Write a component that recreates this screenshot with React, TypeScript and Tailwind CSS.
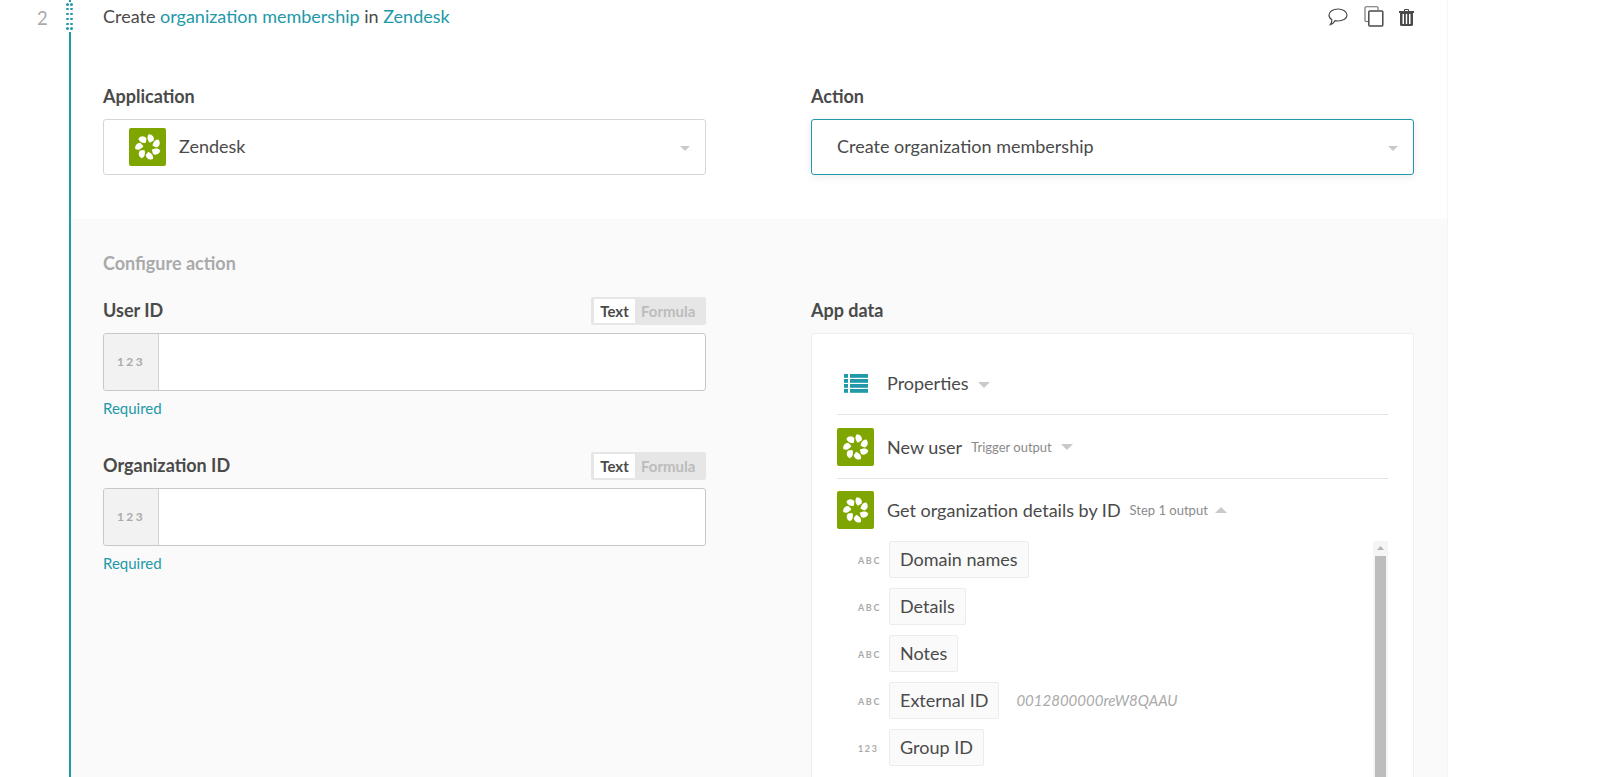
import { ReactNode } from 'react';

// Zendesk app badge, pinwheel of seven petals
const AppLogo = () => (
  <div className="w-[37px] h-[38px] shrink-0 rounded-[2px] bg-[#7fa600] flex items-center justify-center">
    <svg width="26" height="26" viewBox="-13 -13 26 26" fill="#fff">
      {[0, 1, 2, 3, 4, 5, 6].map((i) => (
        <path
          key={i}
          transform={`rotate(${(i * 360) / 7 + 8})`}
          d="M-1 -12.8 C 2.6 -13.2 5.2 -10.8 4.7 -7.2 L 1.3 -4.5 C -1.2 -6.4 -3.1 -9.8 -1 -12.8 Z"
        />
      ))}
    </svg>
  </div>
);

const Caret = ({ up, className }: { up?: boolean; className?: string }) => (
  <svg viewBox="0 0 12 6" className={className}>
    <path d={up ? 'M6 0 L12 6 L0 6 Z' : 'M0 0 L12 0 L6 6 Z'} fill="#c9c9c9" />
  </svg>
);

const ModeToggle = () => (
  <div className="flex h-[28px] w-[115px] items-center rounded-[2px] bg-[#e6e6e6] pl-[3px] text-[15px] font-bold">
    <span className="flex h-[24px] w-[41px] items-center justify-center bg-white text-[#4a4a4a]">Text</span>
    <span className="pl-[6px] text-[#bcbcbc]">Formula</span>
  </div>
);

const NumberField = ({ label }: { label: string }) => (
  <div>
    <div className="flex h-[28px] items-center justify-between">
      <span className="pb-[2px] text-[18px] font-bold text-[#4a4a4a]">{label}</span>
      <ModeToggle />
    </div>
    <div className="mt-[8px] flex h-[58px] rounded-[3px] border border-[#c8c8c8] bg-white">
      <div className="flex w-[55px] items-center justify-center rounded-l-[3px] border-r border-[#d4d4d4] bg-[#f2f2f2] text-[12px] font-bold tracking-[2.4px] text-[#aaaaaa]">
        123
      </div>
    </div>
    <div className="mt-[7px] h-[20px] text-[15px] leading-[20px] text-[#2199a8]">Required</div>
  </div>
);

const DataRow = ({ type, name, value }: { type: string; name: string; value?: string }) => (
  <div className="flex items-center">
    <span className="w-[31px] shrink-0 pt-[2px] text-[9px] font-bold tracking-[1.6px] text-[#aaaaaa]">{type}</span>
    <span className="flex h-[37px] items-center rounded-[2px] border border-[#ececec] bg-[#fafafa] px-[10px] text-[18px] text-[#4a4a4a]">
      {name}
    </span>
    {value && <span className="ml-[17px] text-[15px] italic text-[#aaaaaa]">{value}</span>}
  </div>
);

const SelectBox = ({ children, active }: { children: ReactNode; active?: boolean }) => (
  <div
    className={
      active
        ? 'flex h-[56px] items-center rounded-[3px] border border-[#2199a8] bg-white pl-[25px] pr-[15px] pb-[1px] text-[18px] text-[#4a4a4a] shadow-[0_2px_8px_rgba(0,0,0,0.08)]'
        : 'flex h-[56px] items-center rounded-[3px] border border-[#d6d6d6] bg-white pl-[25px] pr-[15px] pb-[1px] text-[18px] text-[#4a4a4a]'
    }
  >
    {children}
    <Caret className="ml-auto mt-[4px] h-[5px] w-[10px]" />
  </div>
);

export default function App() {
  return (
    <div className="flex h-[777px] w-full overflow-hidden bg-white font-['Lato',sans-serif] text-[#4a4a4a]">
      {/* step number */}
      <div className="w-[69px] shrink-0 pt-[6px] pl-[37px] text-[18.5px] leading-[24px] text-[#aaaaaa]">2</div>

      {/* rail with drag handle */}
      <div className="relative w-[2px] shrink-0">
        <div className="mt-[32px] h-full w-[2px] bg-[#2199a8]" />
        <div className="absolute left-[-3px] top-[3px] grid grid-cols-2 gap-x-[3px] gap-y-[2.4px]">
          {Array.from({ length: 12 }).map((_, i) => (
            <span key={i} className="h-[2.5px] w-[2.5px] rounded-full bg-[#2199a8]" />
          ))}
        </div>
        <div className="absolute left-0 top-0 h-[2px] w-[2px] bg-[#2199a8]" />
      </div>

      <div className="w-[1377px] shrink-0 border-r border-[#f5f5f5]">
        {/* header + selects */}
        <div className="pl-[32px] pr-[33px]">
          <div className="flex h-[34px] items-center justify-between text-[18px]">
            <div className="pb-[2px]">
              Create <span className="text-[#2199a8]">organization membership</span> in{' '}
              <span className="text-[#2199a8]">Zendesk</span>
            </div>
            <div className="flex items-center">
              <svg width="20" height="18" viewBox="0 0 20 18" fill="none" stroke="#4a4a4a" strokeWidth="1.2">
                <path d="M10 1 C15 1 19 3.4 19 7 C19 10.6 15 13 10 13 C9 13 8 12.9 7.2 12.7 C6 14.5 4 16.4 2.4 16.6 C3.4 15.4 3.9 13.6 3.8 11.7 C2 10.6 1 9 1 7 C1 3.4 5 1 10 1 Z" />
              </svg>
              <svg width="20" height="21" viewBox="0 0 20 21" fill="none" className="ml-[16px] mb-[1px]">
                <path d="M4 15.5 H2 a1 1 0 0 1 -1 -1 V1.8 a1 1 0 0 1 1 -1 H13 a1 1 0 0 1 1 1 V4" stroke="#6a6a6a" strokeWidth="1.1" />
                <rect x="4.8" y="5" width="14" height="15" rx="1" stroke="#4a4a4a" strokeWidth="1.5" />
              </svg>
              <svg width="15" height="17" viewBox="0 0 15 17" className="ml-[15px]">
                <path
                  fillRule="evenodd"
                  fill="#4a4a4a"
                  d="M5 2 V1 a1 1 0 0 1 1 -1 H9 a1 1 0 0 1 1 1 V2 H15 V4 H14 V15.5 a1.5 1.5 0 0 1 -1.5 1.5 H2.5 A1.5 1.5 0 0 1 1 15.5 V4 H0 V2 Z M6 2 H9 V1 H6 Z M3.5 5 V15 H5 V5 Z M6.8 5 V15 H8.2 V5 Z M10 5 V15 H11.5 V5 Z"
                />
              </svg>
            </div>
          </div>

          <div className="mt-[50px] grid grid-cols-[603px_603px] gap-x-[105px] pb-[44px]">
            <div>
              <div className="mb-[11px] h-[24px] text-[18px] font-bold leading-[24px]">Application</div>
              <SelectBox>
                <AppLogo />
                <span className="ml-[13px]">Zendesk</span>
              </SelectBox>
            </div>
            <div>
              <div className="mb-[11px] h-[24px] text-[18px] font-bold leading-[24px]">Action</div>
              <SelectBox active>Create organization membership</SelectBox>
            </div>
          </div>
        </div>

        {/* configure action */}
        <div className="h-full bg-[#fafafa] pl-[32px] pr-[33px] pt-[32px]">
          <div className="h-[24px] text-[18px] font-bold leading-[24px] text-[#aaaaaa]">Configure action</div>
          <div className="mt-[22px] grid grid-cols-[603px_603px] gap-x-[105px]">
            <div className="flex flex-col gap-y-[34px]">
              <NumberField label="User ID" />
              <NumberField label="Organization ID" />
            </div>

            <div>
              <div className="flex h-[28px] items-center pb-[2px] text-[18px] font-bold">App data</div>
              <div className="mt-[8px] h-[600px] rounded-[3px] border border-[#eeeeee] bg-white px-[25px] pt-[19px]">
                <div className="flex h-[62px] items-center border-b border-[#e4e4e4]">
                  <svg width="24" height="19" viewBox="0 0 24 19" className="ml-[7px] shrink-0" fill="#2199a8">
                    {[0, 5, 10, 15].map((y) => (
                      <g key={y}>
                        <rect x="0" y={y} width="4" height="3.8" />
                        <rect x="6" y={y} width="18" height="3.8" />
                      </g>
                    ))}
                  </svg>
                  <span className="ml-[19px] text-[18px]">Properties</span>
                  <Caret className="ml-[9px] mt-[2px] h-[6px] w-[12px]" />
                </div>
                <div className="flex h-[64px] items-center border-b border-[#e4e4e4]">
                  <AppLogo />
                  <span className="ml-[13px] pt-[1px] text-[18px]">New user</span>
                  <span className="ml-[9px] mt-[2px] text-[13px] text-[#8a8a8a]">Trigger output</span>
                  <Caret className="ml-[9px] h-[6px] w-[12px]" />
                </div>
                <div className="mt-[12px] flex items-center">
                  <AppLogo />
                  <span className="ml-[13px] pt-[1px] text-[18px]">Get organization details by ID</span>
                  <span className="ml-[9px] mt-[2px] text-[13px] text-[#8a8a8a]">Step 1 output</span>
                  <Caret up className="ml-[7px] h-[6px] w-[12px]" />
                </div>
                <div className="mt-[12px] flex justify-between pl-[21px]">
                  <div className="flex flex-col gap-y-[10px]">
                    <DataRow type="ABC" name="Domain names" />
                    <DataRow type="ABC" name="Details" />
                    <DataRow type="ABC" name="Notes" />
                    <DataRow type="ABC" name="External ID" value="0012800000reW8QAAU" />
                    <DataRow type="123" name="Group ID" />
                  </div>
                  <div className="h-[300px] w-[15px] shrink-0 bg-[#f5f5f5] px-[2px]">
                    <svg width="11" height="15" viewBox="0 0 11 15" className="block">
                      <path d="M5.5 5 L9 9 L2 9 Z" fill="#b5b5b5" />
                    </svg>
                    <div className="h-[285px] bg-[#bdbdbd]" />
                  </div>
                </div>
              </div>
            </div>
          </div>
        </div>
      </div>
    </div>
  );
}
